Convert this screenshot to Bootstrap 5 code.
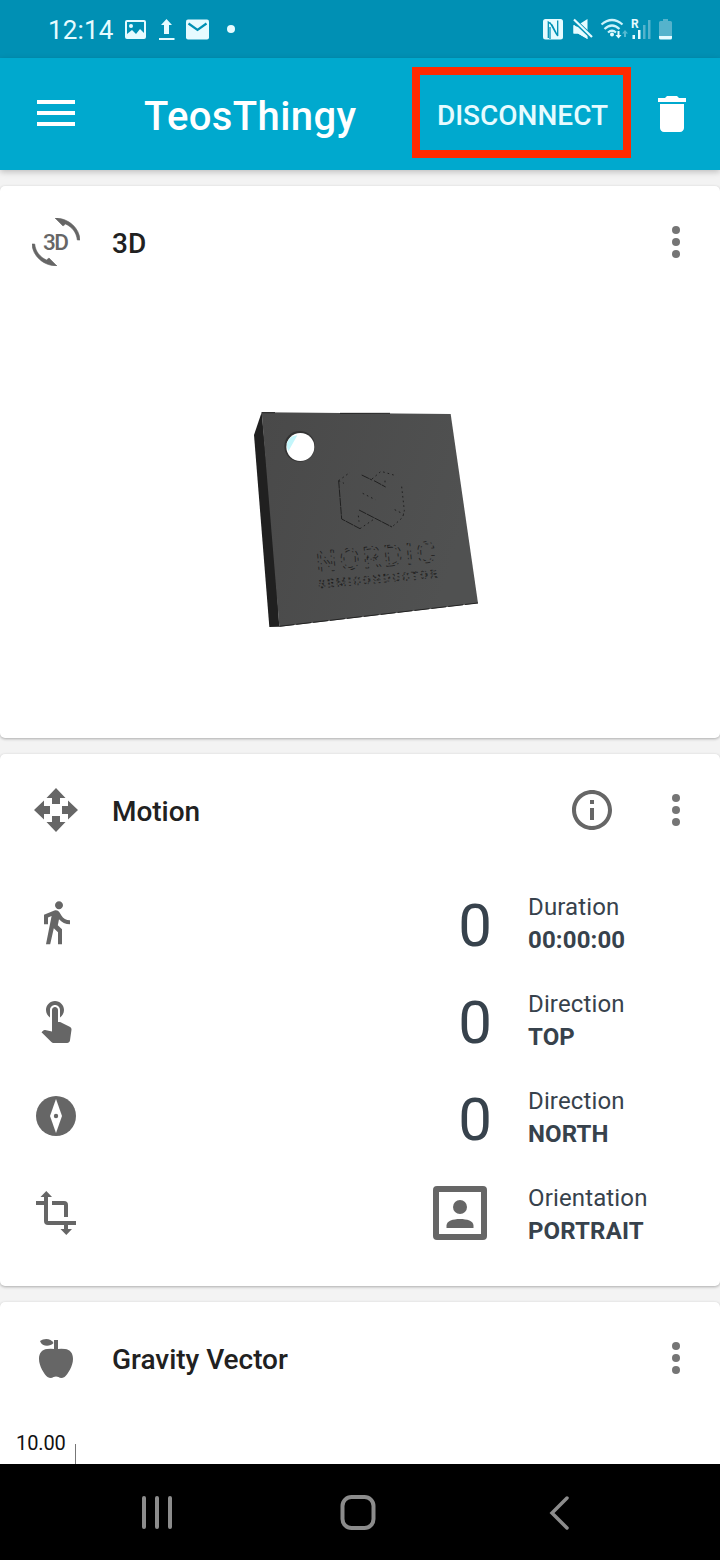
<!DOCTYPE html>
<html lang="en">
<head>
<meta charset="utf-8">
<meta name="viewport" content="width=device-width, initial-scale=1">
<title>TeosThingy</title>
<link href="https://cdn.jsdelivr.net/npm/bootstrap@5.3.0/dist/css/bootstrap.min.css" rel="stylesheet">
<style>
body{font-family:Roboto,"Liberation Sans",sans-serif;background:#f3f3f3;height:1560px;overflow:hidden}
svg{display:block;flex:none}
.screen{width:720px;height:1560px}
.statusbar{height:58px;background:#0090b4;color:#e6fbff;padding:0 47px 0 48px}
.clock{font-size:26px;line-height:56px;width:66px;padding-top:2px;letter-spacing:.15px}
.appbar{height:112px;background:#00a9ce;padding:0 24px 0 32px;box-shadow:0 2px 6px rgba(0,0,0,.22);z-index:1;flex:none}
.app-title{font-size:40px;font-weight:500;line-height:48px;margin:5px 0 0 64px;width:267px;letter-spacing:.4px}
.btn-disconnect{width:219px;height:91px;border:8px solid #ff2a00;border-radius:0;color:#e6fbff;font-size:28px;font-weight:500;padding:6px 0 0 2px;line-height:1;margin:-3px 17px 0 1px}
.panel{background:#fff;border:0;border-radius:5px;box-shadow:0 1px 3px rgba(0,0,0,.3);flex:none}
.panel-head{height:112px;padding:0 20px 0 32px;flex:none}
.panel-title{font-size:28px;font-weight:500;color:#212121;margin:4px 0 0 32px;line-height:36px;letter-spacing:-.03px}
.info-icon{margin-right:36px}
.scene{height:440px;padding:102px 0 0 240px}
.motion-panel{height:532px}
.motion-list{padding-top:8px}
.motion-row{height:97px;padding-left:32px;color:#37424c}
.motion-value{width:412px;font-size:60px;line-height:70px;margin-top:7px}
.motion-text{font-size:24px;line-height:33px;margin:2px 0 0 36px;letter-spacing:.14px}
.portrait{margin-right:-3px}
.gravity-panel{height:300px}
.axis{font-size:20px;line-height:24px;color:#111;padding-left:16px;margin-top:17px;width:75px;letter-spacing:-.1px}
.axis-line{width:1px;height:158px;background:#777;margin-top:30px}
.navbtns{height:96px;background:#000;flex:none;z-index:2;padding:0 149px 0 139px}
.ic{fill:#666}
</style>
</head>
<body>
<div class="screen d-flex flex-column overflow-hidden">
  <div class="statusbar d-flex align-items-center flex-shrink-0">
    <span class="clock">12:14</span>
    <svg width="125" height="24" viewBox="114 17 125 24" fill="#e6fbff" class="me-auto">
      <path fill-rule="evenodd" d="M127 20H144Q146 20 146 22V37Q146 39 144 39H127Q125 39 125 37V22Q125 20 127 20ZM127 22V34L132 30L136 34L140 29L144 33V22Z"/>
      <circle cx="131" cy="26" r="2"/>
      <path d="M166.500 19L172 25H169V34H164V25H161ZM159 38H174.500V40H159Z"/>
      <rect x="186" y="19.500" width="23" height="20" rx="2"/>
      <path d="M188.500 23.500L197.500 30L206.500 23.500" fill="none" stroke="#0090b4" stroke-width="2.200"/>
      <circle cx="231" cy="29" r="4"/>
    </svg>
    <svg width="132" height="24" viewBox="541 17 132 24" fill="#e6fbff">
      <rect x="543" y="19" width="20" height="20.500" rx="2.500"/>
      <path d="M548.300 38V22L552 25L557.700 36V20.500M550 27V39M550 22.500L556 33.500L557.700 36" fill="none" stroke="#0090b4" stroke-width="1.300"/>
      <path d="M573.500 25H578L587.500 19V39L578 33.500H573.500Z"/>
      <path d="M572.500 19.500L592 38" stroke="#0090b4" stroke-width="5.500"/>
      <path d="M573.500 25.500L578 27L587.500 36V39L578 33.500H573.500Z"/>
      <path d="M574 19.500L592 37" stroke="#e6fbff" stroke-width="2.200"/>
      <g fill="none" stroke="#cdf3fb" stroke-width="2.200"><path d="M601.500 24.500Q612 15.500 622.500 24.500M604.500 29Q612 22 619.500 29M608 32.500Q612 29 616 32.500"/></g>
      <circle cx="612" cy="34.500" r="2"/>
      <path d="M617.500 31H619.500V35H621.500L618.500 38.500L615.500 35H617.500Z"/>
      <path d="M624 37V33.500H622L625 30L628 33.500H626V37Z" fill="#55b9d1"/>
      <text x="631" y="28" font-size="12" font-weight="700" font-family="Roboto,sans-serif">R</text>
      <path d="M632.500 35H635V39H632.500ZM638 30H640.500V39H638Z"/>
      <path d="M643 25H645.500V39H643ZM648 20H650.500V39H648ZM663 19H668V21H670.500Q672 21 672 22.500V36H659V22.500Q659 21 660.500 21H663Z" fill="#55b3cc"/>
      <path d="M659 36H672V38Q672 39.500 670.500 39.500H660.500Q659 39.500 659 38Z"/>
    </svg>
  </div>

  <nav class="appbar d-flex align-items-center text-white position-relative">
    <svg width="48" height="48" viewBox="0 0 48 48" fill="#fff"><path d="M5 10h38v4H5zM5 21h38v4H5zM5 32h38v4H5z"/></svg>
    <h1 class="app-title mb-0">TeosThingy</h1>
    <button type="button" class="btn btn-disconnect">DISCONNECT</button>
    <svg width="48" height="48" viewBox="0 0 24 24" fill="#fff"><path d="M6 19c0 1.100.9 2 2 2h8c1.100 0 2-.9 2-2V7H6v12zM19 4h-3.500l-1-1h-5l-1 1H5v2h14V4z"/></svg>
  </nav>

  <main class="d-flex flex-column gap-3 pt-3 flex-grow-1 overflow-hidden">
    <section class="card panel">
      <div class="panel-head d-flex align-items-center">
        <svg width="48" height="48" viewBox="0 0 48 48" class="ic">
          <path id="turn" d="M23 0C36.500 0 47.500 10 48 22H45.300C44.500 14.500 40 8.800 33.500 6L31 8Z" stroke="#666" stroke-width=".6"/>
          <use href="#turn" transform="rotate(180 24 24)"/>
          <text x="11" y="31.500" font-size="22.500" font-weight="500" textLength="26" font-family="Roboto,sans-serif">3D</text>
        </svg>
        <h2 class="panel-title mb-0 me-auto">3D</h2>
        <svg width="48" height="48" viewBox="0 0 24 24" fill="#757575"><circle cx="12" cy="6" r="2"/><circle cx="12" cy="12" r="2"/><circle cx="12" cy="18" r="2"/></svg>
      </div>
      <div class="scene">
        <svg width="250" height="240" viewBox="0 0 750 720">
          <defs><linearGradient id="face" x1="0" x2="1" y1="0" y2=".3"><stop offset="0" stop-color="#494949"/><stop offset="1" stop-color="#505151"/></linearGradient></defs>
          <path d="M65 37L42 105L88 681L118 680L100 400Z" fill="#202020"/>
          <path d="M65 37L632 42L714 610L118 680Z" fill="url(#face)"/>
          <path d="M65 38H105M300 40H450" stroke="#222" stroke-width="3"/>
          <path d="M118 679L714 609" stroke="#222" stroke-width="3" stroke-dasharray="45 6"/>
          <circle cx="179" cy="139" r="46" fill="#333"/>
          <circle cx="181" cy="141" r="42" fill="#fff"/>
          <path d="M141 130Q148 108 172 106L145 154Q139 142 141 130Z" fill="#c3f6fb"/>
          <g fill="none" stroke="#202020" stroke-width="3">
            <path d="M296 242L305 357L360 386M357 330L456 381M402 242L437 261M365 225L396 240" stroke-dasharray="24 2"/>
            <path d="M296 242L330 217M296 242L312 250M396 237L423 214L468 227M485 260L493 332L488 352L456 381M360 386L404 356M368 280L406 299M355 347L357 365M464 329L492 343M435 242V252" stroke-dasharray="5 9"/>
          </g>
          <g font-family="Roboto,sans-serif" fill="none" stroke="#1e1e1e">
            <text transform="translate(230 517) rotate(-5)" font-size="88" textLength="360" stroke-width="2.400" stroke-dasharray="9 13 4 8 14 16">NORDIC</text>
            <text transform="translate(237 564) rotate(-5)" font-size="33" textLength="356" stroke-width="2.400" stroke-dasharray="6 7 3 6">SEMICONDUCTOR</text>
          </g>
        </svg>
      </div>
    </section>

    <section class="card panel motion-panel">
      <div class="panel-head d-flex align-items-center">
        <svg width="48" height="48" viewBox="0 0 48 48" class="ic"><path d="M24 2L33.500 12H28V18H20V12H14.500ZM46 24L36 33.500V28H30V20H36V14.500ZM24 46L14.500 36H20V30H28V36H33.500ZM2 24L12 14.500V20H18V28H12V33.500Z"/></svg>
        <h2 class="panel-title mb-0 me-auto">Motion</h2>
        <svg width="48" height="48" viewBox="0 0 24 24" class="ic info-icon"><path d="M11 17h2v-6h-2v6zm1-15C6.480 2 2 6.480 2 12s4.480 10 10 10 10-4.480 10-10S17.520 2 12 2zm0 18c-4.410 0-8-3.590-8-8s3.590-8 8-8 8 3.590 8 8-3.590 8-8 8zM11 9h2V7h-2v2z"/></svg>
        <svg width="48" height="48" viewBox="0 0 24 24" fill="#757575"><circle cx="12" cy="6" r="2"/><circle cx="12" cy="12" r="2"/><circle cx="12" cy="18" r="2"/></svg>
      </div>
      <div class="motion-list">
        <div class="motion-row d-flex align-items-center">
          <svg width="48" height="48" viewBox="0 .4 24 24" class="ic"><path d="M13.500 5.500c1.100 0 2-.9 2-2s-.9-2-2-2-2 .9-2 2 .9 2 2 2zM9.800 8.900L7 23h2.100l1.800-8 2.100 2v6h2v-7.500l-2.100-2 .6-3C14.800 12 16.800 13 19 13v-2c-1.900 0-3.500-1-4.300-2.400l-1-1.600c-.4-.6-1-1-1.700-1-.3 0-.5.100-.8.100L6 8.300V13h2V9.600l1.800-.7"/></svg>
          <div class="motion-value text-end">0</div>
          <div class="motion-text"><div>Duration</div><div class="fw-bold">00:00:00</div></div>
        </div>
        <div class="motion-row d-flex align-items-center">
          <svg width="48" height="48" viewBox="0 .5 24 24" class="ic"><path d="M9 11.240V7.500C9 6.120 10.120 5 11.500 5S14 6.120 14 7.500v3.740c1.210-.81 2-2.180 2-3.740C16 5.010 13.990 3 11.500 3S7 5.010 7 7.500c0 1.560.79 2.930 2 3.740zm9.840 4.630l-4.540-2.260c-.17-.07-.35-.11-.54-.11H13v-6c0-.83-.67-1.500-1.500-1.500S10 6.670 10 7.500v10.740l-3.430-.72c-.08-.01-.15-.03-.24-.03-.31 0-.59.130-.79.330l-.79.800 4.940 4.940c.27.270.65.440 1.060.440h6.790c.75 0 1.330-.55 1.440-1.280l.75-5.270c.01-.07.020-.14.020-.2 0-.62-.38-1.160-.91-1.380z"/></svg>
          <div class="motion-value text-end">0</div>
          <div class="motion-text"><div>Direction</div><div class="fw-bold">TOP</div></div>
        </div>
        <div class="motion-row d-flex align-items-center">
          <svg width="48" height="48" viewBox="0 0 48 48" class="ic"><circle cx="24" cy="23" r="20"/><path d="M24 6L30 23L24 40L18 23Z" fill="#fff"/><circle cx="24" cy="23" r="2.200"/></svg>
          <div class="motion-value text-end">0</div>
          <div class="motion-text"><div>Direction</div><div class="fw-bold">NORTH</div></div>
        </div>
        <div class="motion-row d-flex align-items-center">
          <svg width="48" height="48" viewBox="0 0 48 48" class="ic"><path d="M14.300 1L20 7H16V31H44V35H36V39H40L34.300 45L28.500 39H32V35H16Q12 35 12 31V15H4V11H12V7H8.500ZM20 11H32Q36 11 36 15V27H32V15H20Z"/></svg>
          <div class="motion-value d-flex justify-content-end mt-0">
            <svg width="62" height="62" viewBox="0 0 62 62" class="ic portrait"><path fill-rule="evenodd" d="M4 3H50Q54 3 54 7V53Q54 57 50 57H4Q0 57 0 53V7Q0 3 4 3ZM6 9V51H48V9Z"/><circle cx="27" cy="24" r="7"/><path d="M13.500 45V42.500C13.500 38 20 36 27 36S40.500 38 40.500 42.500V45Z"/></svg>
          </div>
          <div class="motion-text"><div>Orientation</div><div class="fw-bold">PORTRAIT</div></div>
        </div>
      </div>
    </section>

    <section class="card panel gravity-panel">
      <div class="panel-head d-flex align-items-center">
        <svg width="48" height="48" viewBox="0 -4 48 48" class="ic"><path d="M22 11V2H26V11Q29 10.500 33 11C38 11.500 41 15 41 21C41 28 36 36 32.500 39Q29 41 26.500 39Q24 38 21.500 39Q19 41 15.500 39C12 36 7 28 7 21C7 15 10 11.500 15 11Q19 10.500 22 11Z"/><path d="M8 3C12 0 19 0 21.500 5C18 9 10 9 8 3Z"/></svg>
        <h2 class="panel-title mb-0 me-auto">Gravity Vector</h2>
        <svg width="48" height="48" viewBox="0 0 24 24" fill="#757575"><circle cx="12" cy="6" r="2"/><circle cx="12" cy="12" r="2"/><circle cx="12" cy="18" r="2"/></svg>
      </div>
      <div class="d-flex align-items-start"><span class="axis">10.00</span><span class="axis-line"></span></div>
    </section>
  </main>

  <div class="navbtns d-flex align-items-center justify-content-between">
    <svg width="36" height="40" viewBox="0 0 36 40" stroke="#8c8c8c" stroke-width="4" stroke-linecap="round"><path d="M5 6V35M18 6V35M31 6V35"/></svg>
    <svg width="38" height="40" viewBox="3 0 38 40" fill="none" stroke="#8c8c8c" stroke-width="4" overflow="visible"><rect x="3.500" y="5" width="31" height="31" rx="9"/></svg>
    <svg width="24" height="40" viewBox="0 0 24 40" fill="none" stroke="#8c8c8c" stroke-width="3.500" stroke-linecap="round"><path d="M20 6L5 21L20 36"/></svg>
  </div>
</div>
<script src="https://cdn.jsdelivr.net/npm/bootstrap@5.3.0/dist/js/bootstrap.bundle.min.js"></script>
</body>
</html>
